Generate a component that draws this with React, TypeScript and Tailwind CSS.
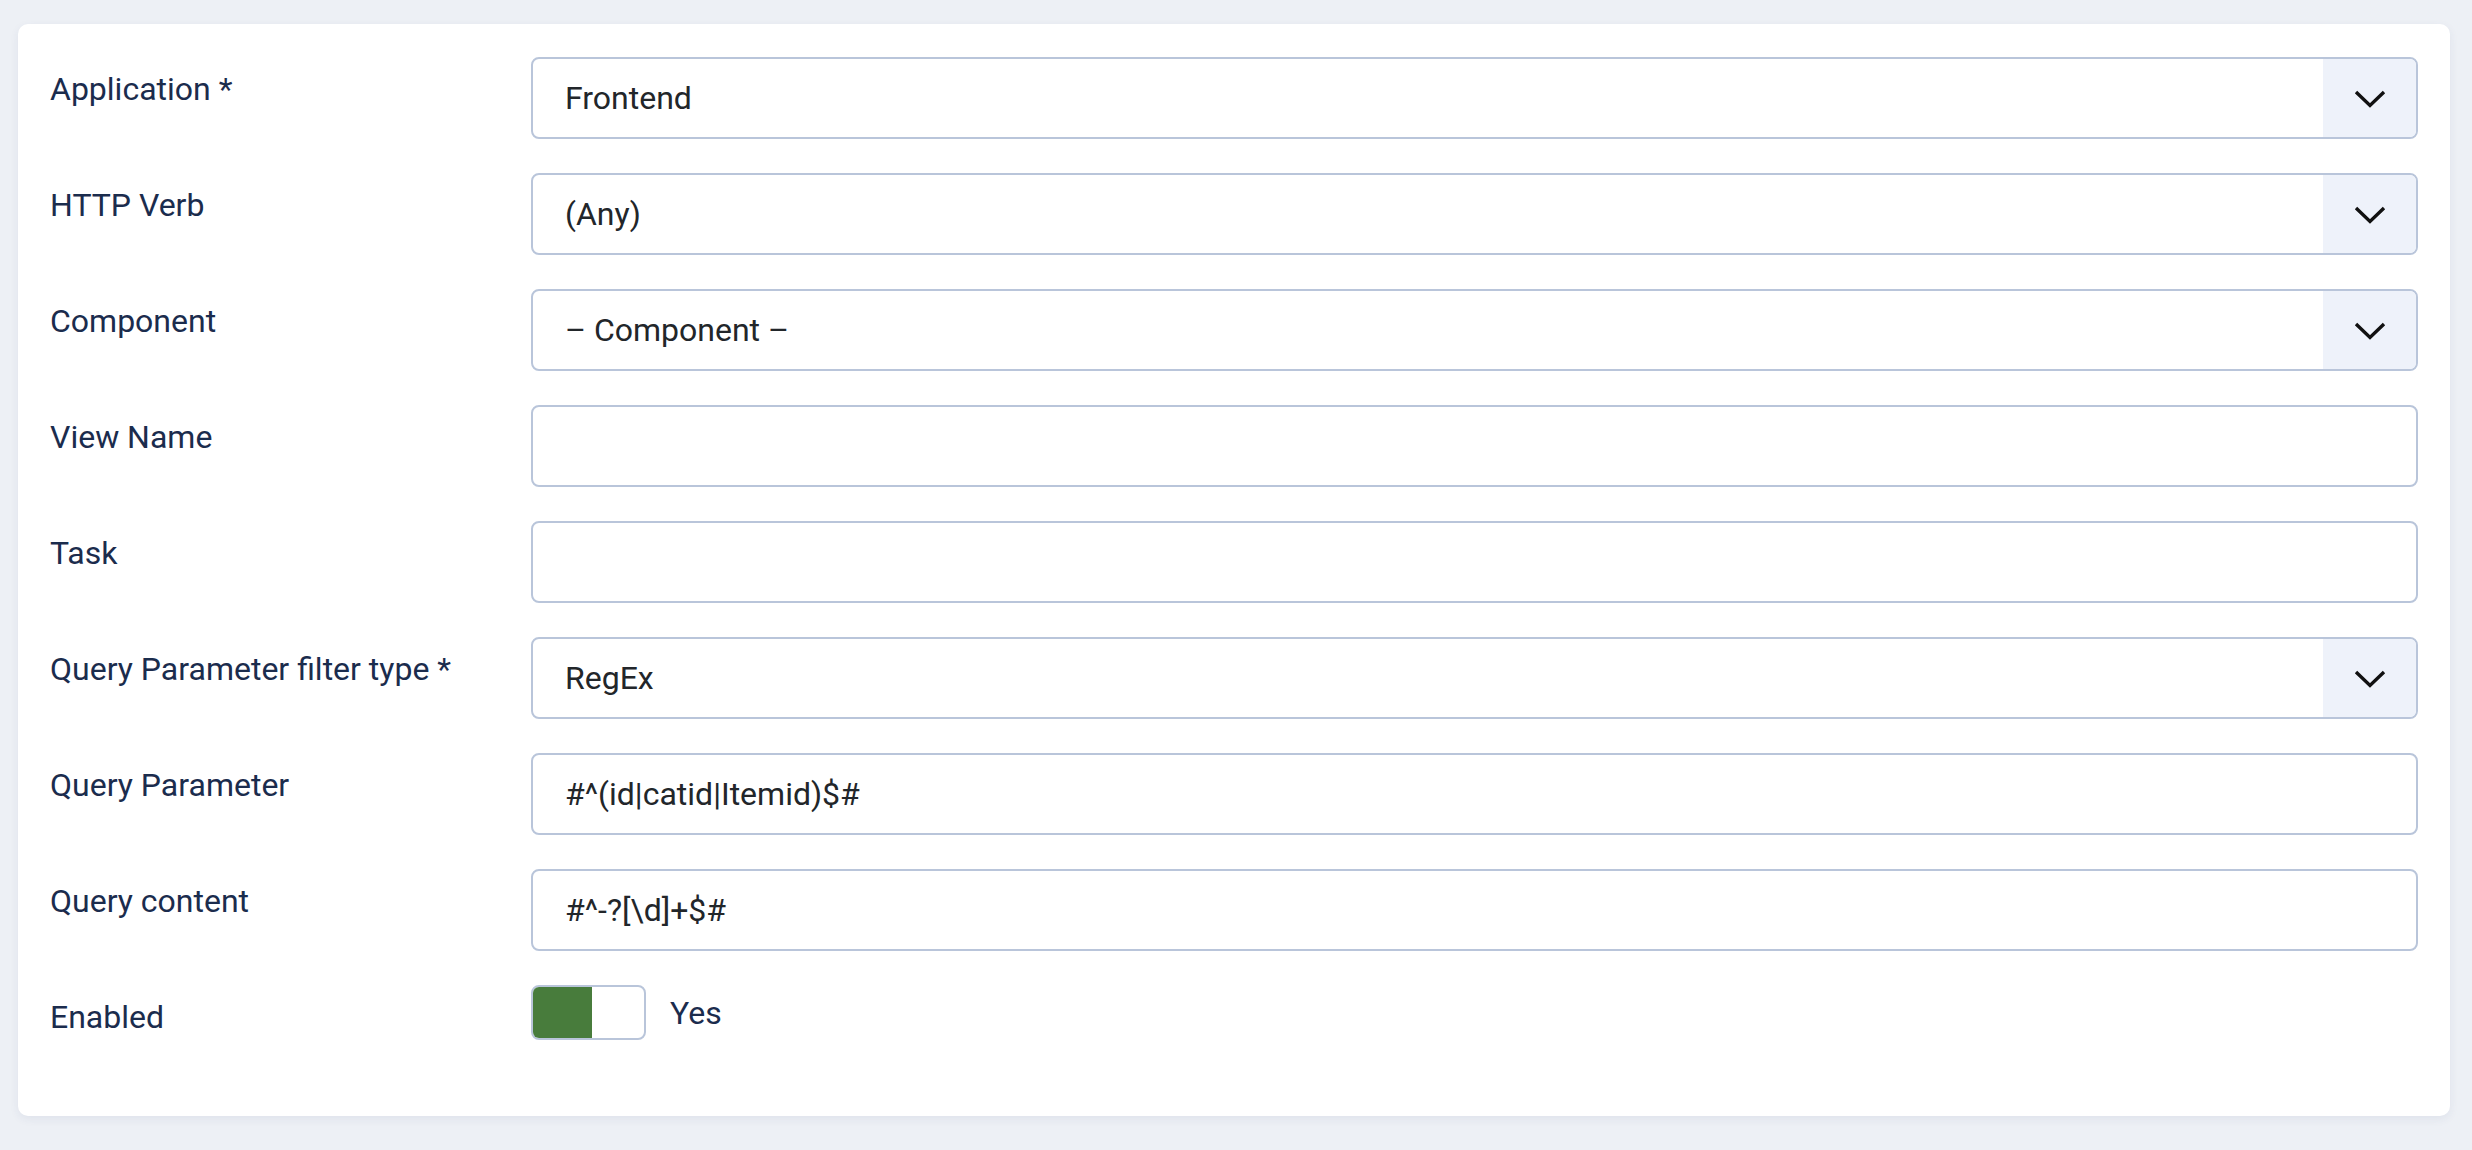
import { ReactNode } from 'react'

type Field =
  | { label: string; kind: 'select'; value: string }
  | { label: string; kind: 'text'; value: string }
  | { label: string; kind: 'toggle'; value: string }

const fields: Field[] = [
  { label: 'Application *', kind: 'select', value: 'Frontend' },
  { label: 'HTTP Verb', kind: 'select', value: '(Any)' },
  { label: 'Component', kind: 'select', value: '– Component –' },
  { label: 'View Name', kind: 'text', value: '' },
  { label: 'Task', kind: 'text', value: '' },
  { label: 'Query Parameter filter type *', kind: 'select', value: 'RegEx' },
  { label: 'Query Parameter', kind: 'text', value: '#^(id|catid|Itemid)$#' },
  { label: 'Query content', kind: 'text', value: '#^-?[\\d]+$#' },
  { label: 'Enabled', kind: 'toggle', value: 'Yes' },
]

function Chevron() {
  return (
    <svg width="32" height="18" viewBox="0 0 32 18" fill="none">
      <path d="M2 2 L16 15.5 L30 2" stroke="#111" strokeWidth="3.4" strokeLinecap="butt" strokeLinejoin="miter" />
    </svg>
  )
}

function Control({ field }: { field: Field }): ReactNode {
  if (field.kind === 'toggle') {
    return (
      <div className="flex items-center gap-[24px]">
        <div className="flex h-[55px] w-[115px] overflow-hidden rounded-[8px] border-2 border-[#b9c5da] bg-white">
          <div className="h-full w-[59px] bg-[#487c3c]" />
        </div>
        <span className="text-[32px] leading-[48px] text-[#1b2c4d]">{field.value}</span>
      </div>
    )
  }
  return (
    <div className="flex h-[82px] overflow-hidden rounded-[8px] border-2 border-[#b9c5da] bg-white">
      <div className="flex flex-1 items-center pl-[32px] text-[32px] leading-[48px] text-[#22262a]">
        {field.value}
      </div>
      {field.kind === 'select' && (
        <div className="flex w-[93px] items-center justify-center bg-[#eef2fa] pt-[2px]">
          <Chevron />
        </div>
      )}
    </div>
  )
}

export default function App() {
  return (
    <div
      className="min-h-[1150px] bg-[#edf0f5] pt-[24px] pr-[22px] pb-[36px] pl-[18px]"
      style={{ fontFamily: 'Roboto, "Noto Sans", sans-serif' }}
    >
      <div className="flex flex-col gap-[34px] rounded-[10px] bg-white px-[32px] pt-[33px] pb-[75px] shadow-[0_3px_10px_rgba(40,60,110,0.07)]">
        {fields.map((f) => (
          <div key={f.label} className="flex">
            <label className="w-[481px] shrink-0 pt-[8px] text-[32px] leading-[48px] text-[#1b2c4d]">
              {f.label}
            </label>
            <div className="flex-1">
              <Control field={f} />
            </div>
          </div>
        ))}
      </div>
    </div>
  )
}
